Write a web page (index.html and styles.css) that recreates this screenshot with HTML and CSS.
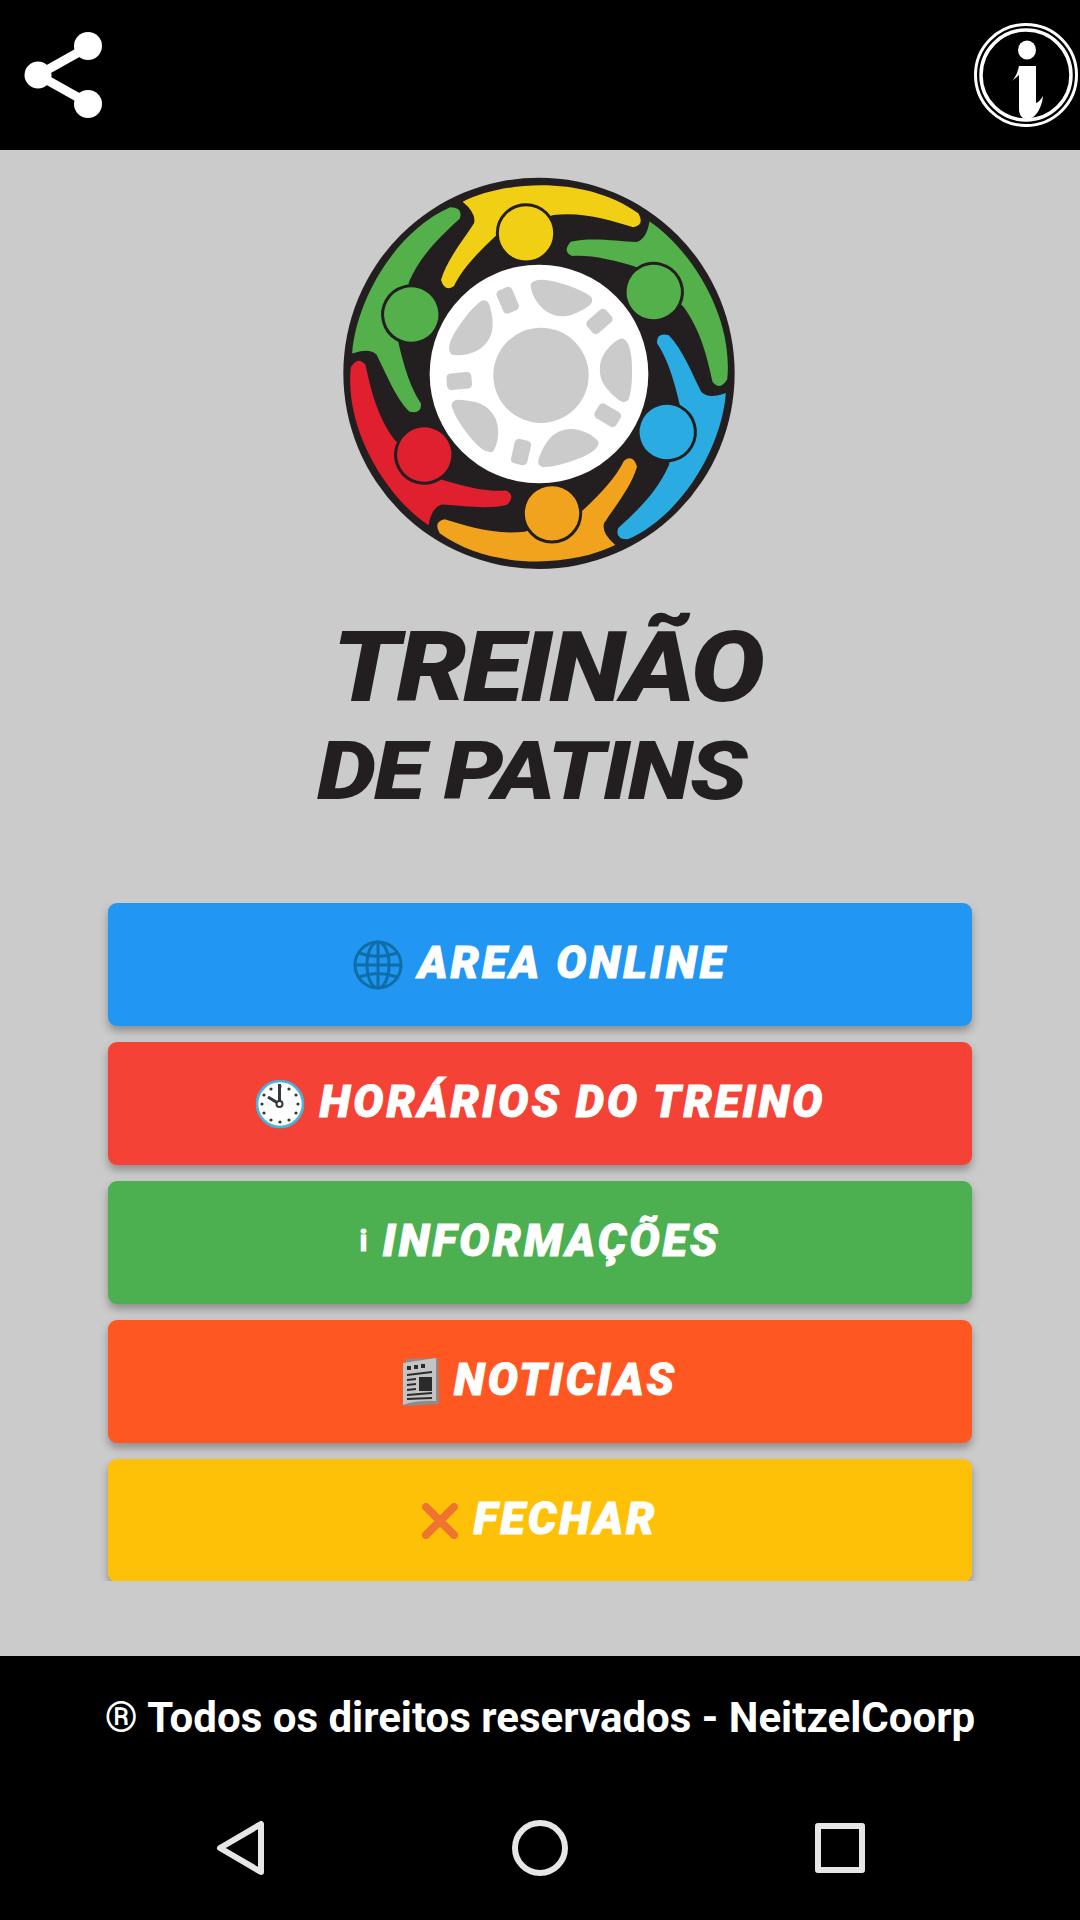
FILE: index.html
```html
<!DOCTYPE html>
<html>

<head>
  <meta name="viewport" content="width=device-width, initial-scale=1">
  <link rel="stylesheet" href="styles.css">
</head>

<body>
  <div class="topbar">
    <svg class="share" viewBox="0 0 80 90">
      <path d="M66 17 L16 45 L66 73" fill="none" stroke="#fff" stroke-width="9"/>
      <circle cx="66" cy="16" r="14" fill="#fff"/>
      <circle cx="16" cy="45" r="13.500" fill="#fff"/>
      <circle cx="66" cy="74" r="14" fill="#fff"/>
    </svg>
    <svg class="info" viewBox="0 0 108 108">
      <circle cx="54" cy="54" r="50.500" fill="none" stroke="#fff" stroke-width="3"/>
      <circle cx="54" cy="54" r="45" fill="none" stroke="#fff" stroke-width="3.500"/>
      <ellipse cx="55" cy="29" rx="9" ry="9.500" fill="#fff"/>
      <path d="M40 60 C44 56 46 50 47 45 H64 V82 C67 81 69 78 71 75 C70 86 64 98 55 98 C50 98 47 94 47 88 V54 C45 56 42 58 40 60 Z" fill="#fff"/>
    </svg>
  </div>

  <section class="content">
    <svg class="logo" viewBox="0 0 1260 1260">
      <defs>
        <g id="person">
          <path d="M398 125 C530 60 770 48 925 160 Q945 195 910 202 C840 180 760 155 670 165 L500 225 C440 280 395 330 372 378 Q345 398 333 360 C350 300 400 240 432 190 Q440 160 398 125 Z"/>
          <circle cx="588" cy="220" r="86" stroke="#231f20" stroke-width="9"/>
        </g>
        <path id="hole" d="M875 535 Q900 540 905 600 Q910 680 895 720 Q880 735 860 715 C830 690 805 660 810 620 C812 585 845 545 875 535 Z"/>
        <rect id="slot" x="350" y="638" width="75" height="50" rx="13" transform="rotate(-5 387 662)"/>
      </defs>
      <circle cx="627" cy="640" r="587" fill="#231f20"/>
      <use href="#person" fill="#f0cf15"/>
      <use href="#person" fill="#54b04a" transform="rotate(60 627 640)"/>
      <use href="#person" fill="#2aabe2" transform="rotate(120 627 640)"/>
      <use href="#person" fill="#f2a31e" transform="rotate(180 627 640)"/>
      <use href="#person" fill="#e01f2f" transform="rotate(240 627 640)"/>
      <use href="#person" fill="#54b04a" transform="rotate(300 627 640)"/>
      <circle cx="627" cy="642" r="328" fill="#fff"/>
      <g fill="#cbcbcb">
        <circle cx="633" cy="646" r="143"/>
        <use href="#hole"/>
        <use href="#hole" transform="rotate(72 627 642)"/>
        <use href="#hole" transform="rotate(144 627 642)"/>
        <use href="#hole" transform="rotate(216 627 642)"/>
        <use href="#hole" transform="rotate(288 627 642)"/>
        <use href="#slot"/>
        <use href="#slot" transform="rotate(72 627 642)"/>
        <use href="#slot" transform="rotate(144 627 642)"/>
        <use href="#slot" transform="rotate(216 627 642)"/>
        <use href="#slot" transform="rotate(288 627 642)"/>
      </g>
    </svg>

    <div class="brand">
      <div class="brand-top">TREINÃO</div>
      <div class="brand-bottom">DE PATINS</div>
    </div>

    <div class="menu">
      <a class="btn btn-blue" href="#">
        <svg class="btn-icon" viewBox="0 0 50 50" fill="none" stroke="#0f6ea6" stroke-width="3">
          <circle cx="25" cy="25" r="23"/>
          <ellipse cx="25" cy="25" rx="11" ry="23"/>
          <path d="M25 2 V48 M2 25 H48 M6 13 Q25 20 44 13 M6 37 Q25 30 44 37"/>
        </svg>
        <span>AREA ONLINE</span>
      </a>
      <a class="btn btn-red" href="#">
        <svg class="btn-icon" viewBox="0 0 50 50">
          <circle cx="25" cy="25" r="23" fill="#fff" stroke="#45b4e0" stroke-width="2.600"/>
          <g fill="#33373b">
            <circle cx="25" cy="7.500" r="1.600"/>
            <circle cx="34" cy="10" r="1.600"/>
            <circle cx="41" cy="16" r="1.600"/>
            <circle cx="43" cy="25" r="1.600"/>
            <circle cx="41" cy="34" r="1.600"/>
            <circle cx="34" cy="41" r="1.600"/>
            <circle cx="25" cy="43" r="1.600"/>
            <circle cx="16" cy="41" r="1.600"/>
            <circle cx="9" cy="34" r="1.600"/>
            <circle cx="7" cy="25" r="1.600"/>
            <circle cx="9" cy="16" r="1.600"/>
            <circle cx="16" cy="10" r="1.600"/>
          </g>
          <path d="M24.500 5 V25 L13 18" fill="none" stroke="#33373b" stroke-width="3"/>
          <circle cx="24.500" cy="25" r="3" fill="#fff" stroke="#33373b" stroke-width="2"/>
        </svg>
        <span>HORÁRIOS DO TREINO</span>
      </a>
      <a class="btn btn-green" href="#">
        <span class="info-char">i</span>
        <span>INFORMAÇÕES</span>
      </a>
      <a class="btn btn-orange" href="#">
        <svg class="btn-icon news" viewBox="0 0 36 48">
          <path d="M3 1 L35 0 L36 46 L2 48 Z" fill="#8c8c8c"/>
          <path d="M0 5 L33 0 L33 43 Q14 42 0 47 Z" fill="#c4c4c4"/>
          <path d="M4 8 h4 v4 h-4 z M11 7 h4 v4 h-4 z M18 6 h4 v4 h-4 z M16 19 h13 v14 h-13 z" fill="#2b2b2b"/>
          <path d="M4 17 L29 14 M4 22 L13 21 M4 27 L13 26 M4 32 L13 31 M4 37 L29 35 M4 41 L29 40" fill="none" stroke="#2b2b2b" stroke-width="1.800"/>
        </svg>
        <span>NOTICIAS</span>
      </a>
      <a class="btn btn-yellow" href="#">
        <svg class="btn-icon cross" viewBox="0 0 36 36">
          <path d="M4 4 L32 32 M32 4 L4 32" stroke="#ee7430" stroke-width="8" stroke-linecap="round"/>
        </svg>
        <span>FECHAR</span>
      </a>
    </div>
  </section>

  <div class="footer">
    <div class="rights">® Todos os direitos reservados - NeitzelCoorp</div>
    <div class="navkeys">
      <svg class="key" viewBox="0 0 60 60" fill="none" stroke="#e6e6e6" stroke-width="6" stroke-linejoin="round">
        <path d="M51 6 L51 54 L10 30 Z"/>
      </svg>
      <svg class="key" viewBox="0 0 60 60" fill="none" stroke="#e6e6e6" stroke-width="6">
        <circle cx="30" cy="30" r="25"/>
      </svg>
      <svg class="key" viewBox="0 0 60 60" fill="none" stroke="#e6e6e6" stroke-width="6" stroke-linejoin="round">
        <rect x="8" y="8" width="44" height="44"/>
      </svg>
    </div>
  </div>
</body>

</html>
```

FILE: styles.css
```css
/* ----------App-Shell--------------- */
body {
  margin: 0px;
  padding: 0px;
  height: 1920px;
  display: flex;
  flex-direction: column;
  font-family: Roboto, "Liberation Sans", sans-serif;
  background-color: #000;
}

.topbar {
  display: flex;
  flex-direction: row;
  align-items: center;
  justify-content: space-between;
  height: 150px;
  padding: 0px 0px 0px 22px;
  background-color: #000;
}

.share {
  width: 80px;
  height: 90px;
}

.info {
  width: 108px;
  height: 108px;
}

.content {
  flex: 1;
  display: flex;
  flex-direction: column;
  align-items: center;
  background-color: #cbcbcb;
}

/* --------------logo---------------------------- */
.logo {
  width: 420px;
  height: 420px;
  margin-top: 10px;
}

.brand {
  display: flex;
  flex-direction: column;
  align-items: center;
  margin-top: 36px;
  color: #231f20;
  font-style: italic;
  font-weight: 900;
}

.brand-top {
  font-size: 98px;
  line-height: 104px;
  letter-spacing: -3px;
  margin-left: 13px;
  transform: scaleX(1.13);
}

.brand-bottom {
  font-size: 82px;
  line-height: 96px;
  letter-spacing: -2px;
  margin-top: 3px;
  margin-right: 18px;
  transform: scaleX(1.15);
}

/* --------------buttons---------------------------- */
.menu {
  display: flex;
  flex-direction: column;
  gap: 16px;
  align-self: stretch;
  height: 678px;
  margin-top: 84px;
  padding: 0px 108px;
  overflow: hidden;
}

.btn {
  flex: none;
  display: flex;
  flex-direction: row;
  align-items: center;
  justify-content: center;
  gap: 15px;
  height: 123px;
  border-radius: 9px;
  color: #fff;
  font-size: 45px;
  font-style: italic;
  font-weight: 900;
  letter-spacing: 3px;
  -webkit-text-stroke: 1px #fff;
  text-decoration: none;
  box-shadow: 0px 5px 8px rgba(0, 0, 0, .3);
}

.btn span {
  margin-top: -4px;
}

.btn-blue { background-color: #2196f3; }
.btn-red { background-color: #f44336; }
.btn-green { background-color: #4caf50; }
.btn-orange { background-color: #ff5722; }
.btn-yellow { background-color: #ffc107; }

.btn-icon {
  width: 50px;
  height: 50px;
  flex: none;
}

.btn-icon.news {
  width: 36px;
  height: 48px;
}

.btn-icon.cross {
  width: 36px;
  height: 36px;
}

.info-char {
  font-size: 30px;
  font-style: normal;
  font-weight: 700;
  letter-spacing: 0px;
}

/* --------------footer---------------------------- */
.footer {
  height: 264px;
  background-color: #000;
}

.rights {
  padding-top: 38px;
  color: #fff;
  font-size: 42px;
  font-weight: 700;
  line-height: 48px;
  text-align: center;
}

.navkeys {
  display: flex;
  flex-direction: row;
  justify-content: space-between;
  margin-top: 76px;
  padding: 0px 210px;
}

.key {
  width: 60px;
  height: 60px;
}
```
